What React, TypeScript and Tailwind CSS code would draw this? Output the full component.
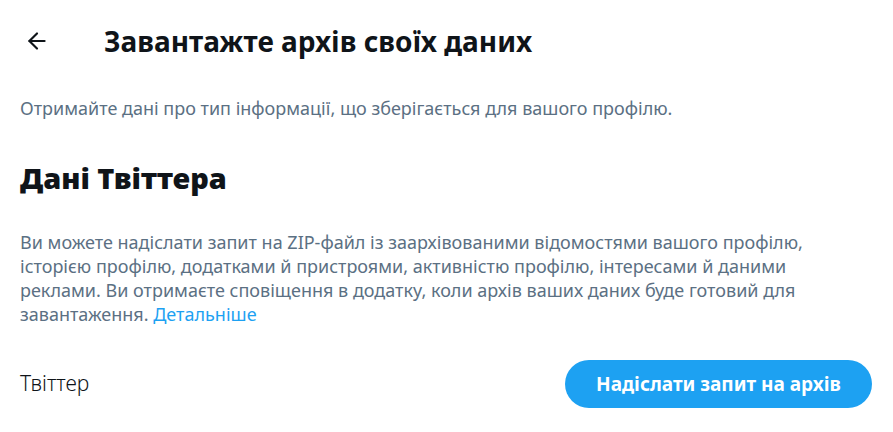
import { ArrowLeft } from 'lucide-react';

export default function App() {
  return (
    <div
      className="w-[893px] h-[432px] bg-white text-[#0f1419] overflow-hidden"
      style={{ fontFamily: '"Noto Sans", "Open Sans", sans-serif' }}
    >
      {/* Header */}
      <div className="flex items-center h-[82px] px-[14px]">
        <div className="w-[46px] h-[40px] flex items-center justify-center mr-[44px]">
          <ArrowLeft className="w-[26px] h-[26px]" strokeWidth={2} />
        </div>
        <h1 className="text-[28px] font-bold leading-none">Завантажте архів своїх даних</h1>
      </div>

      <p className="px-[20px] mt-[14px] text-[18px] text-[#5b7083] leading-[24px]">
        Отримайте дані про тип інформації, що зберігається для вашого профілю.
      </p>

      <h2 className="px-[20px] mt-[42px] text-[29px] font-black leading-[32px]">Дані Твіттера</h2>

      <p className="px-[20px] mt-[36px] text-[18px] text-[#5b7083] leading-[24px] w-[850px]">
        Ви можете надіслати запит на ZIP-файл із заархівованими відомостями вашого профілю, історією профілю,
        додатками й пристроями, активністю профілю, інтересами й даними реклами. Ви отримаєте сповіщення в
        додатку, коли архів ваших даних буде готовий для завантаження.{' '}
        <a href="#" className="text-[#1da1f2]">Детальніше</a>
      </p>

      <div className="flex items-center justify-between pl-[20px] pr-[21px] mt-[34px]">
        <span className="text-[21px] font-light">Твіттер</span>
        <button className="h-[48px] w-[307px] rounded-full bg-[#1da1f2] text-white text-[19px] font-bold">
          Надіслати запит на архів
        </button>
      </div>
    </div>
  );
}
